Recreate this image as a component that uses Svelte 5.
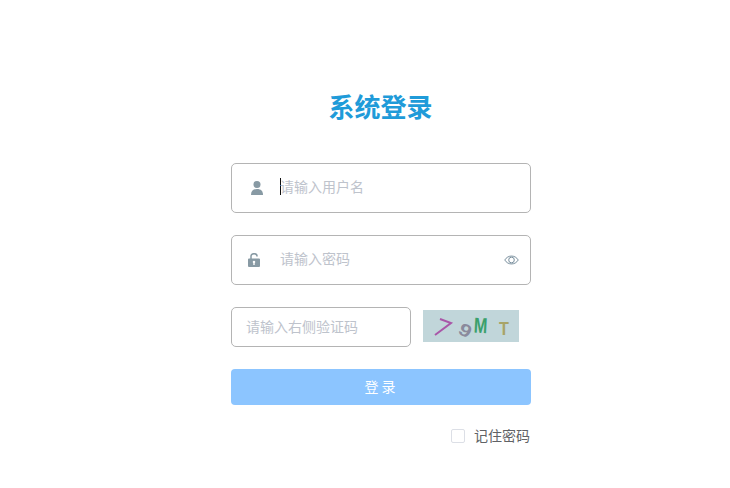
<script>
  const font = '"Liberation Sans", sans-serif';
</script>

<main class="page">
  <form class="form">
    <h1 class="title">系统登录</h1>

    <div class="field">
      <svg class="icon lead user" viewBox="0 0 12 14" aria-hidden="true">
        <circle cx="6" cy="3.500" r="3.500" />
        <path d="M0 14c0-4 2-6 6-6s6 2 6 6z" />
      </svg>
      <span class="caret"></span>
      <span class="ph">请输入用户名</span>
    </div>

    <div class="field">
      <svg class="icon lead lock" viewBox="0 0 12 14" aria-hidden="true">
        <path class="shackle" d="M3 6V3a3 2.300 0 0 1 6 0v.6" />
        <path fill-rule="evenodd" d="M1 5.500h10a1 1 0 0 1 1 1V13a1 1 0 0 1-1 1H1a1 1 0 0 1-1-1V6.500a1 1 0 0 1 1-1zM6 7.700a1.200 1.200 0 0 0-.7 2.200V12h1.400V9.900A1.200 1.200 0 0 0 6 7.700z" />
      </svg>
      <span class="ph">请输入密码</span>
      <svg class="eye" viewBox="0 0 16 10" aria-hidden="true">
        <path d="M.8 5C2.600 2.200 5 .8 8 .8S13.400 2.200 15.200 5C13.400 7.800 11 9.200 8 9.200S2.600 7.800.8 5z" />
        <circle cx="8" cy="5" r="3" />
      </svg>
    </div>

    <div class="captcha-row">
      <div class="field small">
        <span class="ph">请输入右侧验证码</span>
      </div>
      <svg class="captcha" viewBox="0 0 96 32" aria-hidden="true">
        <rect width="96" height="32" fill="#c1d6da" />
        <path d="M12 25 L28 13 L17 9" stroke="#a957a8" stroke-width="2" fill="none" />
        <text transform="translate(34 23) rotate(28) scale(1.300 1.050)" class="c9" font-family={font}>9</text>
        <text transform="translate(50.500 22.500) rotate(3) scale(.9 1.200)" class="cm" font-family={font}>M</text>
        <text transform="translate(76 25) scale(.95 1.100)" class="ct" font-family={font}>T</text>
      </svg>
    </div>

    <button type="button" class="submit">登 录</button>

    <div class="remember">
      <span class="box"></span>
      <span class="label">记住密码</span>
    </div>
  </form>
</main>

<style>
  :global(body) {
    margin: 0;
    background: #fff;
  }

  .page {
    display: flex;
    height: 488px;
    padding-left: 231px;
    box-sizing: border-box;
    font-family: "Noto Sans CJK SC", "Liberation Sans", sans-serif;
  }

  .form {
    width: 300px;
    padding-top: 87px;
  }

  .title {
    margin: 0 0 39px;
    height: 37px;
    line-height: 37px;
    font-size: 26px;
    font-weight: 700;
    color: #1f9bd9;
    text-align: center;
    text-indent: -1px;
  }

  .field {
    position: relative;
    display: flex;
    align-items: center;
    box-sizing: border-box;
    height: 50px;
    margin-bottom: 22px;
    padding-left: 48px;
    border: 1px solid #b4b4b4;
    border-radius: 5px;
    background: #fff;
  }

  .ph {
    font-size: 14px;
    line-height: 20px;
    color: #bec3cc;
    position: relative;
    top: -2px;
  }

  .caret {
    position: absolute;
    left: 48px;
    top: 14px;
    width: 1px;
    height: 17px;
    background: #111;
  }

  .icon {
    position: absolute;
    fill: #889aa4;
  }

  .user {
    left: 19px;
    top: 17px;
    width: 12px;
    height: 14px;
  }

  .lock {
    left: 16px;
    top: 17px;
    width: 12px;
    height: 14px;
  }

  .shackle {
    fill: none;
    stroke: #889aa4;
    stroke-width: 1.500;
  }

  .eye {
    position: absolute;
    right: 11px;
    top: 19px;
    width: 15px;
    height: 10px;
    fill: none;
    stroke: #708896;
    stroke-width: 1;
  }

  .captcha-row {
    display: flex;
    align-items: flex-start;
    gap: 12px;
    margin-bottom: 22px;
  }

  .small {
    width: 180px;
    height: 40px;
    margin-bottom: 0;
    padding-left: 14px;
  }

  .small .ph {
    top: -1px;
  }

  .captcha {
    width: 96px;
    height: 32px;
    margin-top: 3px;
  }

  .c9 {
    font-size: 17px;
    font-weight: 700;
    fill: #8a8a9c;
  }

  .cm {
    font-size: 18px;
    font-weight: 700;
    fill: #3aa06c;
  }

  .ct {
    font-size: 17px;
    font-weight: 700;
    fill: #a8a468;
  }

  .submit {
    display: block;
    width: 100%;
    height: 36px;
    padding: 0 0 2px;
    border: 0;
    border-radius: 4px;
    background: #8cc5ff;
    color: #fff;
    font: inherit;
    font-size: 14px;
    text-indent: -2px;
  }

  .remember {
    display: flex;
    align-items: center;
    justify-content: flex-end;
    margin-top: 22px;
    height: 18px;
  }

  .box {
    box-sizing: border-box;
    width: 14px;
    height: 14px;
    margin-right: 9px;
    border: 1px solid #dcdfe6;
    border-radius: 2px;
    background: #fff;
  }

  .label {
    font-size: 14px;
    line-height: 16px;
    height: 18px;
    margin-right: 1px;
    color: #606266;
  }
</style>
